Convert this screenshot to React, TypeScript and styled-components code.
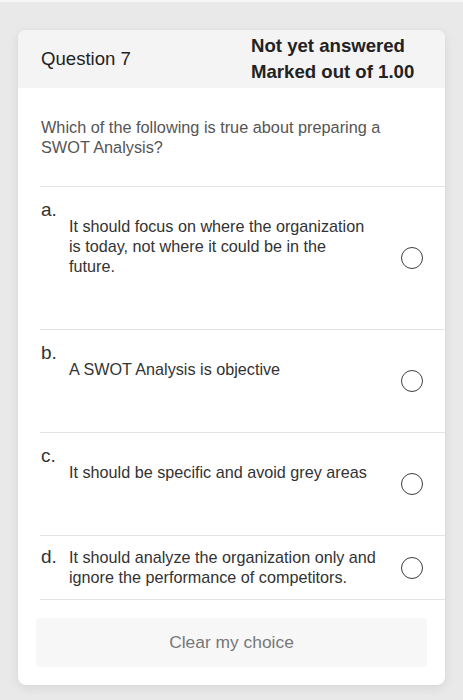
import React, { useState } from "react";
import styled, { createGlobalStyle } from "styled-components";

const GlobalStyle = createGlobalStyle`
  html, body {
    margin: 0;
    padding: 0;
  }
  body {
    background: #e9e9e9;
    border-top: 2px solid #f6f6f6;
    font-family: "Liberation Sans", Arial, sans-serif;
  }
`;

const Page = styled.div`
  padding: 28px 18px 14px 18px;
`;

const Card = styled.div`
  background: #ffffff;
  border-radius: 8px;
  overflow: hidden;
  box-shadow: 0 3px 12px rgba(0, 0, 0, 0.08), 0 0 2px rgba(0, 0, 0, 0.04);
`;

const Header = styled.div`
  display: grid;
  grid-template-columns: 210px 1fr;
  height: 58px;
  padding-left: 23px;
  background: #f4f4f4;
  color: #1f1f1f;
  font-size: 18.6px;
`;

const Title = styled.div`
  align-self: center;
  line-height: 22px;
`;

const State = styled.div`
  padding-top: 3px;
  line-height: 26px;
  font-weight: 700;
  color: #222;
`;

const Content = styled.div`
  padding: 29px 0 0 22px;
`;

const QuestionText = styled.div`
  font-size: 16.3px;
  line-height: 20px;
  color: #555;
  margin: 0 0 29px 1px;
  width: 370px;
`;

const OptionRow = styled.label<{ $last?: boolean }>`
  display: flex;
  align-items: center;
  border-top: 1px solid #e3e3e3;
  border-bottom: ${(p) => (p.$last ? "1px solid #e3e3e3" : "none")};
  cursor: pointer;
`;

const OptionBody = styled.div<{ $inline?: boolean }>`
  display: flex;
  flex-direction: ${(p) => (p.$inline ? "row" : "column")};
  align-items: ${(p) => (p.$inline ? "baseline" : "flex-start")};
  padding: ${(p) => (p.$inline ? "10px 0 12px 1px" : "12px 0 53px 1px")};
  color: #333;
`;

const Letter = styled.span`
  display: block;
  width: 28px;
  flex-shrink: 0;
  font-size: 19px;
  line-height: 22px;
`;

const OptionText = styled.div<{ $inline?: boolean }>`
  width: 308px;
  margin: ${(p) => (p.$inline ? "0" : "-5px 0 0 28px")};
  font-size: 16.2px;
  line-height: 20px;
`;

const Radio = styled.span<{ $checked?: boolean }>`
  flex-shrink: 0;
  margin: 0 22px 0 auto;
  width: 20px;
  height: 20px;
  border: 1.6px solid #3e3e3e;
  border-radius: 50%;
  display: flex;
  align-items: center;
  justify-content: center;

  &::after {
    content: "";
    width: 10px;
    height: 10px;
    border-radius: 50%;
    background: ${(p) => (p.$checked ? "#3e3e3e" : "transparent")};
  }
`;

const Footer = styled.div`
  padding: 18px;
`;

const ClearButton = styled.button`
  display: flex;
  align-items: center;
  justify-content: center;
  width: 100%;
  height: 49px;
  border: none;
  border-radius: 4px;
  background: #f7f7f7;
  color: #777;
  font-family: "Liberation Sans", Arial, sans-serif;
  font-size: 17.4px;
  cursor: pointer;
`;

const options: { letter: string; text: React.ReactNode; inline?: boolean }[] = [
  {
    letter: "a.",
    text: (
      <>
        It should focus on where the organization is today, not where it could
        be in the
        <br />
        future.
      </>
    ),
  },
  { letter: "b.", text: "A SWOT Analysis is objective" },
  { letter: "c.", text: "It should be specific and avoid grey areas" },
  {
    letter: "d.",
    text: "It should analyze the organization only and ignore the performance of competitors.",
    inline: true,
  },
];

export default function App() {
  const [selected, setSelected] = useState<number | null>(null);

  return (
    <>
      <GlobalStyle />
      <Page>
        <Card>
          <Header>
            <Title>Question 7</Title>
            <State>
              <div>Not yet answered</div>
              <div>Marked out of 1.00</div>
            </State>
          </Header>
          <Content>
            <QuestionText>
              Which of the following is true about preparing a SWOT Analysis?
            </QuestionText>
            {options.map((o, i) => (
              <OptionRow
                key={o.letter}
                $last={i === options.length - 1}
                onClick={() => setSelected(i)}
              >
                <OptionBody $inline={o.inline}>
                  <Letter>{o.letter}</Letter>
                  <OptionText $inline={o.inline}>{o.text}</OptionText>
                </OptionBody>
                <Radio $checked={selected === i} />
              </OptionRow>
            ))}
          </Content>
          <Footer>
            <ClearButton onClick={() => setSelected(null)}>
              Clear my choice
            </ClearButton>
          </Footer>
        </Card>
      </Page>
    </>
  );
}
